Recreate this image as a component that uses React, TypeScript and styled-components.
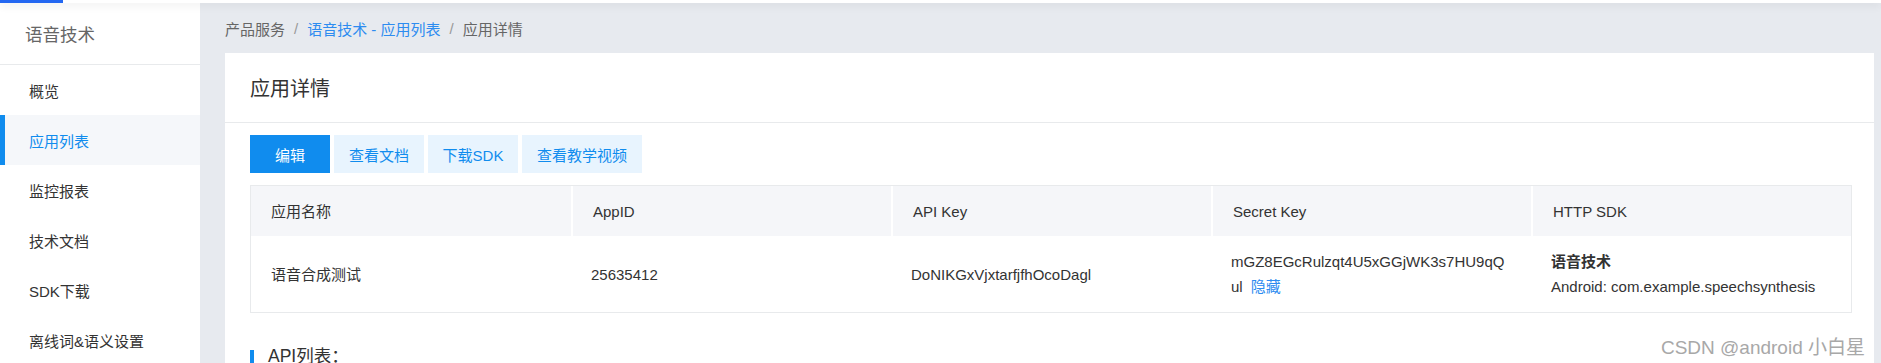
import styled, { createGlobalStyle } from "styled-components";

const GlobalStyle = createGlobalStyle`
  html, body {
    margin: 0;
    height: 363px;
    overflow: hidden;
    background: #e7eaef;
  }
  body {
    font-family: "Liberation Sans", "Noto Sans CJK SC", sans-serif;
    font-size: 15px;
    color: #333;
  }
  * { box-sizing: border-box; }
`

const Page = styled.div`
  position: relative;
  display: flex;
  flex-direction: column;
  height: 363px;
  overflow: hidden;
`

const TopBar = styled.div`
  position: relative;
  z-index: 2;
  flex-shrink: 0;
  height: 3px;
  background: #fff;
  box-shadow: 0 2px 8px rgba(0, 0, 0, 0.12);
  display: flex;
`

const TopBarActive = styled.div`
  width: 63px;
  background: #2468f2;
`

const Layout = styled.div`
  flex: 1;
  display: flex;
  min-height: 0;
`

const Sidebar = styled.aside`
  width: 200px;
  flex-shrink: 0;
  background: #fff;
  display: flex;
  flex-direction: column;
  overflow: hidden;
`

const SidebarTitle = styled.div`
  flex-shrink: 0;
  height: 62px;
  display: flex;
  align-items: center;
  padding-left: 25px;
  font-size: 17.5px;
  color: #666;
  border-bottom: 1px solid #e8eaec;
`

const MenuItem = styled.div<{ $active?: boolean }>`
  position: relative;
  flex-shrink: 0;
  height: 50px;
  display: flex;
  align-items: center;
  padding-left: 29px;
  color: ${p => (p.$active ? "#108cee" : "#333")};
  background: ${p => (p.$active ? "#f5f7fa" : "transparent")};

  &::before {
    content: "";
    display: ${p => (p.$active ? "block" : "none")};
    position: absolute;
    left: 0;
    top: 0;
    bottom: 0;
    width: 5px;
    background: #108cee;
  }
`

const Main = styled.main`
  flex: 1;
  min-width: 0;
  padding: 0 7px 0 25px;
  display: flex;
  flex-direction: column;
  overflow: hidden;
`

const Breadcrumb = styled.nav`
  flex-shrink: 0;
  height: 50px;
  display: flex;
  align-items: center;
  color: #666;
`

const Crumb = styled.span<{ $link?: boolean }>`
  color: ${p => (p.$link ? "#2d8cf0" : "#666")};
`

const Sep = styled.span`
  margin: 0 9px;
  color: #999;
`

const Card = styled.section`
  flex: 1 0 auto;
  background: #fff;
`

const CardHeader = styled.header`
  height: 70px;
  display: flex;
  align-items: center;
  padding-left: 25px;
  font-size: 20px;
  color: #333;
  border-bottom: 1px solid #e8eaec;
`

const CardBody = styled.div`
  padding: 12px 22px 0 25px;
`

const Actions = styled.div`
  display: flex;
  gap: 4px;
  margin-bottom: 12px;
`

const ActionButton = styled.button<{ $primary?: boolean; $w: number }>`
  width: ${p => p.$w}px;
  height: 38px;
  border: none;
  padding: 0;
  font-family: inherit;
  font-size: 15px;
  cursor: pointer;
  color: ${p => (p.$primary ? "#fff" : "#108cee")};
  background: ${p => (p.$primary ? "#108cee" : "#e8f4fe")};
`

const Table = styled.div`
  border: 1px solid #e8eaec;
`

const Row = styled.div<{ $head?: boolean }>`
  display: grid;
  grid-template-columns: repeat(5, 1fr);
  height: ${p => (p.$head ? "50px" : "76px")};
  background: ${p => (p.$head ? "#f5f6f9" : "#fff")};
`

const Cell = styled.div<{ $head?: boolean }>`
  display: flex;
  flex-direction: column;
  justify-content: center;
  padding: 0 20px;
  line-height: 25px;
  color: #333;
  word-break: break-all;
  border-left: ${p => (p.$head ? "2px solid #fff" : "none")};

  &:first-child {
    border-left: none;
  }
`

const KeyLine = styled.div`
  display: flex;
  align-items: baseline;
`

const HideLink = styled.a`
  margin-left: 8px;
  color: #2d8cf0;
  cursor: pointer;
`

const Strong = styled.div`
  font-weight: bold;
`

const SectionTitle = styled.h3`
  margin: 37px 0 0;
  padding-left: 14px;
  border-left: 4px solid #108cee;
  font-size: 17.5px;
  font-weight: normal;
  line-height: 13px;
  height: 24px;
  color: #333;
`

const Watermark = styled.div`
  position: absolute;
  right: 16px;
  bottom: 4px;
  font-size: 19px;
  color: #a8a8a8;
  text-shadow: 0 0 1px #fff;
`

const menu = ["概览", "应用列表", "监控报表", "技术文档", "SDK下载", "离线词&语义设置"]

const headers = ["应用名称", "AppID", "API Key", "Secret Key", "HTTP SDK"]

const secretKey = "mGZ8EGcRulzqt4U5xGGjWK3s7HU9qQul"

export default function App() {
  return (
    <>
      <GlobalStyle />
      <Page>
        <TopBar>
          <TopBarActive />
        </TopBar>
        <Layout>
          <Sidebar>
            <SidebarTitle>语音技术</SidebarTitle>
            {menu.map(m => (
              <MenuItem key={m} $active={m === "应用列表"}>{m}</MenuItem>
            ))}
          </Sidebar>
          <Main>
            <Breadcrumb>
              <Crumb>产品服务</Crumb>
              <Sep>/</Sep>
              <Crumb $link>语音技术 - 应用列表</Crumb>
              <Sep>/</Sep>
              <Crumb>应用详情</Crumb>
            </Breadcrumb>
            <Card>
              <CardHeader>应用详情</CardHeader>
              <CardBody>
                <Actions>
                  <ActionButton $primary $w={80}>编辑</ActionButton>
                  <ActionButton $w={90}>查看文档</ActionButton>
                  <ActionButton $w={90}>下载SDK</ActionButton>
                  <ActionButton $w={120}>查看教学视频</ActionButton>
                </Actions>
                <Table>
                  <Row $head>
                    {headers.map(h => (
                      <Cell $head key={h}>{h}</Cell>
                    ))}
                  </Row>
                  <Row>
                    <Cell>语音合成测试</Cell>
                    <Cell>25635412</Cell>
                    <Cell>DoNIKGxVjxtarfjfhOcoDagl</Cell>
                    <Cell>
                      <div>{secretKey.slice(0, 30)}</div>
                      <KeyLine>
                        <span>{secretKey.slice(30)}</span>
                        <HideLink>隐藏</HideLink>
                      </KeyLine>
                    </Cell>
                    <Cell>
                      <Strong>语音技术</Strong>
                      <div>Android: com.example.speechsynthesis</div>
                    </Cell>
                  </Row>
                </Table>
                <SectionTitle>API列表：</SectionTitle>
              </CardBody>
            </Card>
          </Main>
        </Layout>
        <Watermark>CSDN @android 小白星</Watermark>
      </Page>
    </>
  )
}
